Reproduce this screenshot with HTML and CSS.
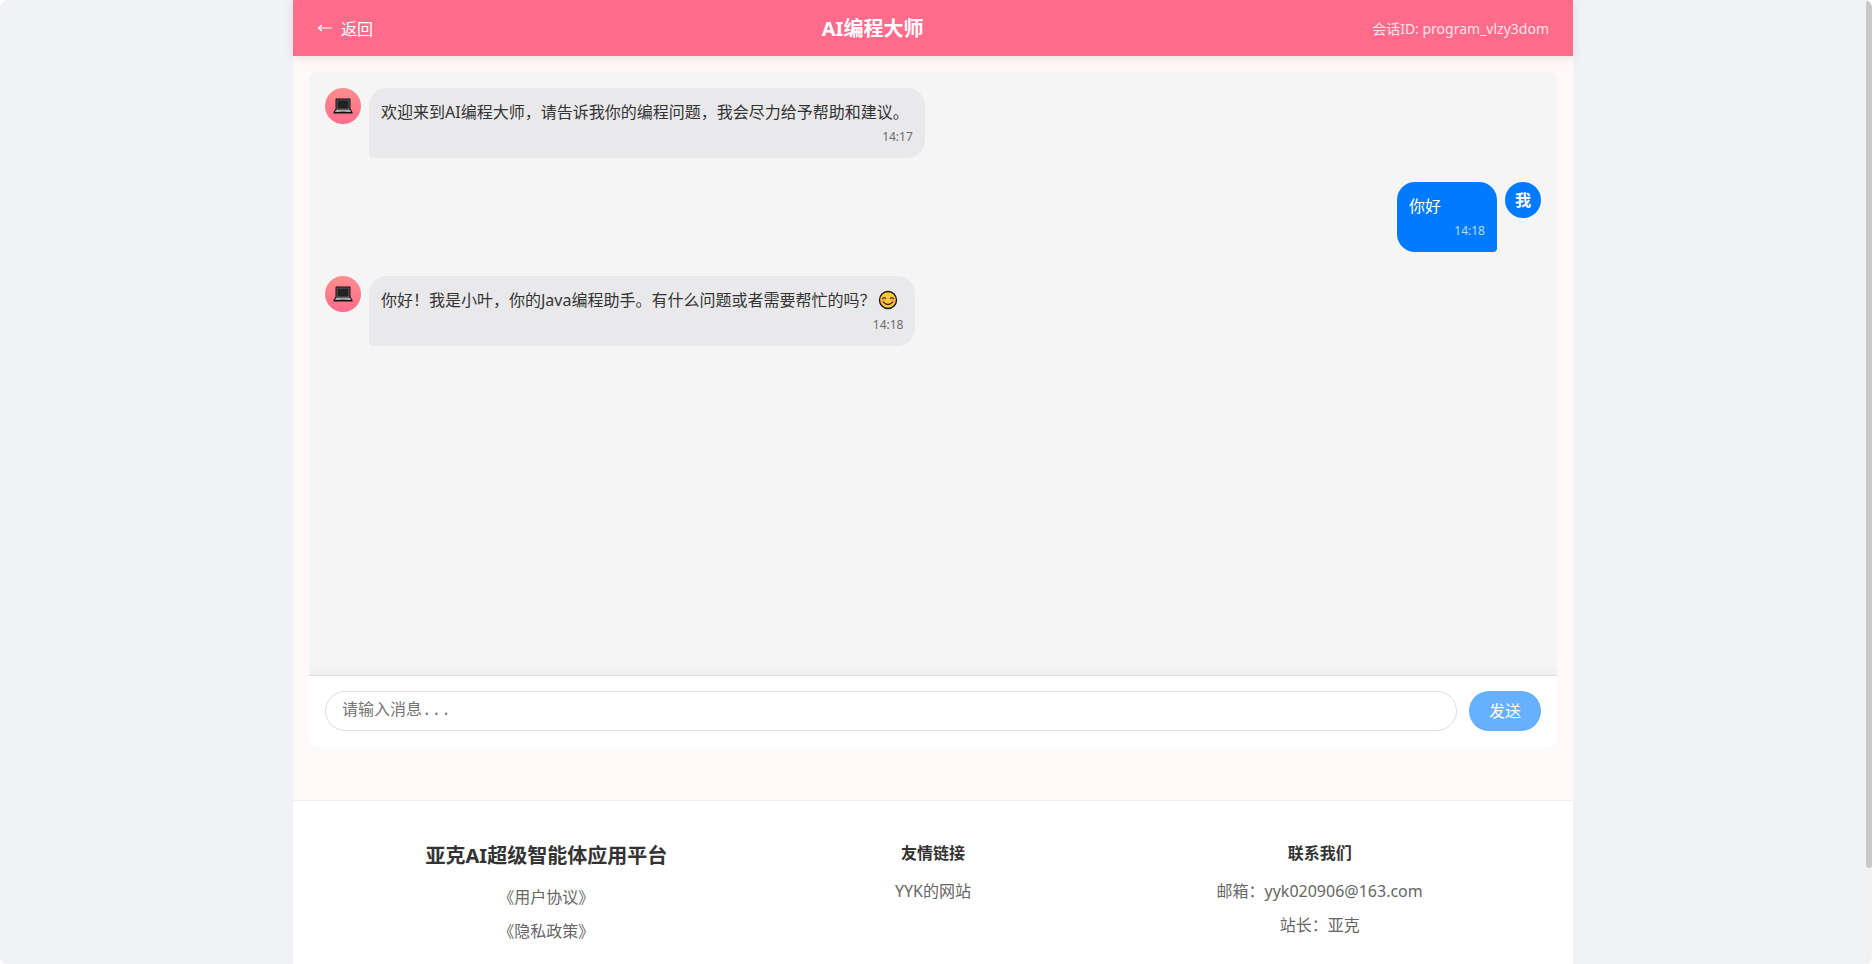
FILE: index.html
```html
<!DOCTYPE html>
<html lang="zh-CN">
<head>
<meta charset="utf-8">
<meta name="viewport" content="width=device-width, initial-scale=1">
<title>AI编程大师</title>
<link rel="stylesheet" href="styles.css">
</head>
<body>
<svg class="sprite" aria-hidden="true">
  <symbol id="laptop" viewBox="0 0 20 16">
    <path d="M3.5 .5h13q1 0 1 1v9.500l2 3v1.500h-19v-1.500l2-3v-9.500q0-1 1-1z" fill="#111"/>
    <path d="M3.700 1.700h12.600v9.300h-12.600z" fill="#8b8d90"/>
    <path d="M4.300 2.300h11.400v8.400h-11.400z" fill="#222"/>
    <path d="M3.300 11.600h13.400l1.500 2.400h-16.400z" fill="#a9abad"/>
    <path d="M7.500 12.900h5l.4 1.100h-5.800z" fill="#77797c"/>
  </symbol>
</svg>
<div class="page">
  <div class="app">
    <header class="header">
      <button class="back" type="button"><svg class="back-arrow" viewBox="0 0 16 16" aria-hidden="true"><path d="M15 7H1.500M5 4 1.500 7 5 10" fill="none" stroke="currentColor" stroke-width="1.200"/></svg>返回</button>
      <h1 class="title">AI编程大师</h1>
      <span class="session">会话ID: program_vlzy3dom</span>
    </header>
    <main class="main">
      <section class="chat">
        <div class="messages">
          <article class="message">
            <div class="avatar"><svg class="laptop" role="img" aria-label="AI"><use href="#laptop"/></svg></div>
            <div class="bubble">
              <p class="text">欢迎来到AI编程大师，请告诉我你的编程问题，我会尽力给予帮助和建议。&nbsp;</p>
              <time class="time">14:17</time>
            </div>
          </article>
          <article class="message mine">
            <div class="avatar">我</div>
            <div class="bubble">
              <p class="text">你好</p>
              <time class="time">14:18</time>
            </div>
          </article>
          <article class="message">
            <div class="avatar"><svg class="laptop" role="img" aria-label="AI"><use href="#laptop"/></svg></div>
            <div class="bubble">
              <p class="text">你好！我是小叶，你的Java编程助手。有什么问题或者需要帮忙的吗？<svg class="smile" viewBox="0 0 20 20" role="img" aria-label="微笑"><circle cx="10" cy="10" r="8.500" fill="#ffc83d" stroke="#111" stroke-width="1.300"/><circle cx="5" cy="11.200" r="1.700" fill="#ff8257"/><circle cx="15" cy="11.200" r="1.700" fill="#ff8257"/><path d="M4.500 8.700q1.600-2 3.200 0M12.300 8.700q1.600-2 3.200 0M5.700 12.500q4.300 4 8.600 0" fill="none" stroke="#4d3212" stroke-width="1.200" stroke-linecap="round"/></svg></p>
              <time class="time">14:18</time>
            </div>
          </article>
        </div>
        <form class="composer">
          <input class="field" type="text" placeholder="请输入消息..." aria-label="消息">
          <button class="send" type="button">发送</button>
        </form>
      </section>
    </main>
    <footer class="footer">
      <div class="column">
        <h2 class="brand">亚克AI超级智能体应用平台</h2>
        <a class="entry" href="#terms">《用户协议》</a>
        <a class="entry" href="#privacy">《隐私政策》</a>
      </div>
      <div class="column">
        <h3 class="heading">友情链接</h3>
        <a class="entry" href="#site">YYK的网站</a>
      </div>
      <div class="column">
        <h3 class="heading">联系我们</h3>
        <p class="entry">邮箱：yyk020906@163.com</p>
        <p class="entry">站长：亚克</p>
      </div>
    </footer>
  </div>
</div>
<div class="scroll-track" aria-hidden="true"><div class="scroll-thumb"></div></div>
</body>
</html>
```
FILE: styles.css
```css
* {
  box-sizing: border-box;
  margin: 0;
  padding: 0;
}

html {
  background: #fff;
}

body {
  display: flex;
  height: 100vh;
  overflow: hidden;
  border-radius: 8px;
  background: #f0f2f6;
  color: #333;
  font: 16px/26px "Noto Sans", "Noto Sans CJK SC", sans-serif;
}

button,
input {
  font: inherit;
}

.sprite {
  position: absolute;
  width: 0;
  height: 0;
}

.page {
  flex: 1;
  min-width: 0;
  overflow: hidden;
}

.app {
  display: flex;
  flex-direction: column;
  max-width: 1280px;
  min-height: 100%;
  margin: 0 auto;
  background: #fff9f9;
}

.header {
  display: flex;
  align-items: center;
  justify-content: space-between;
  min-height: 56px;
  padding: 2px 24px 0;
  background: #ff6b8b;
  box-shadow: 0 2px 10px rgba(0, 0, 0, 0.1);
  color: #fff;
}

.back {
  display: flex;
  align-items: center;
  gap: 8px;
  border: 0;
  background: none;
  color: inherit;
}

.back-arrow {
  width: 16px;
  height: 16px;
}

.title {
  font-size: 20px;
  font-weight: 700;
}

.session {
  font-size: 14px;
  opacity: 0.8;
}

.main {
  padding: 16px 16px 53px;
}

.chat {
  display: flex;
  flex-direction: column;
  height: 70vh;
  overflow: hidden;
  border-radius: 8px;
  background: #f5f5f5;
}

.messages {
  display: flex;
  flex: 1;
  flex-direction: column;
  gap: 24px;
  padding: 16px;
}

.message {
  display: flex;
  align-items: flex-start;
  gap: 8px;
}

.mine {
  flex-direction: row-reverse;
}

.avatar {
  display: flex;
  flex: none;
  align-items: center;
  justify-content: center;
  width: 36px;
  height: 36px;
  border-radius: 50%;
  background: linear-gradient(to top, #ff6b8b, #ff8e8e);
  color: #fff;
  font-weight: 700;
}

.mine .avatar {
  background: #007bff;
}

.laptop {
  width: 20px;
  height: 16px;
}

.bubble {
  min-width: 100px;
  max-width: 70%;
  padding: 12px;
  border-radius: 18px 18px 18px 4px;
  background: #e9e9eb;
}

.mine .bubble {
  border-radius: 18px 18px 4px 18px;
  background: #007bff;
  color: #fff;
}

.text {
  line-height: 24px;
}

.smile {
  width: 20px;
  height: 20px;
  margin: 0 5px 0 3px;
  vertical-align: -4px;
}

.time {
  display: block;
  margin-top: 4px;
  font-size: 12px;
  line-height: 18px;
  text-align: right;
  opacity: 0.7;
}

.composer {
  display: flex;
  gap: 12px;
  padding: 15px 16px 16px;
  border-top: 1px solid #ddd;
  background: #fff;
  box-shadow: 0 -2px 10px rgba(0, 0, 0, 0.05);
}

.field {
  flex: 1;
  min-width: 0;
  height: 40px;
  padding: 0 16px;
  border: 1px solid #ddd;
  border-radius: 20px;
  background: #fff;
  color: #333;
  font-family: "Liberation Mono", "Noto Sans CJK SC", monospace;
}

.field::placeholder {
  color: #757575;
}

.send {
  padding: 0 20px;
  border: 0;
  border-radius: 20px;
  background: #66b0ff;
  color: #fff;
}

.footer {
  display: grid;
  flex: 1;
  grid-template-columns: repeat(3, 1fr);
  padding: 39px 60px;
  border-top: 1px solid #eee;
  background: #fff;
  text-align: center;
}

.column {
  display: flex;
  flex-direction: column;
  align-items: center;
  gap: 8px;
}

.brand {
  margin-bottom: 4px;
  font-size: 20px;
  line-height: 32px;
}

.heading {
  margin-bottom: 4px;
  font-size: 16px;
  font-weight: 600;
}

.entry {
  color: #666;
  text-decoration: none;
}

.scroll-track {
  width: 6px;
  background: #f1f1f1;
}

.scroll-thumb {
  height: 90%;
  border-radius: 3px;
  background: #c8c8c8;
}
```
